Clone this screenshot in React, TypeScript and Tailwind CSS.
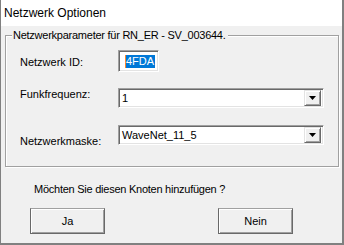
import type { ReactNode } from 'react';

function Sunken({ className, children }: { className: string; children?: ReactNode }) {
  return (
    <div
      className={`flex items-center bg-white border border-t-[#a0a0a0] border-l-[#a0a0a0] border-b-white border-r-white shadow-[inset_1px_1px_0_#696969,inset_-1px_-1px_0_#e3e3e3] ${className}`}
    >
      {children}
    </div>
  );
}

function ComboBox({ value }: { value: string }) {
  return (
    <Sunken className="w-[206px] h-[20px] pl-[3px] pr-[2px]">
      <span className="flex-1 leading-[13px] text-black">{value}</span>
      {/* dropdown arrow button */}
      <div className="w-[17px] h-[16px] flex items-center justify-center bg-[#f0f0f0] border border-t-[#e3e3e3] border-l-[#e3e3e3] border-b-[#696969] border-r-[#696969] shadow-[inset_1px_1px_0_#fff,inset_-1px_-1px_0_#a0a0a0]">
        <svg width="7" height="4" viewBox="0 0 7 4">
          <path d="M0 0h7L3.5 4z" fill="#000" />
        </svg>
      </div>
    </Sunken>
  );
}

function DialogButton({ label }: { label: string }) {
  return (
    <button
      type="button"
      className="w-[75px] h-[26px] bg-[#f0f0f0] border border-t-[#a0a0a0] border-l-[#696969] border-b-[#696969] border-r-[#696969] shadow-[inset_1px_1px_0_#fff,inset_-1px_-1px_0_#a0a0a0] text-[11px] leading-[13px] text-black"
    >
      {label}
    </button>
  );
}

export default function App() {
  return (
    <div className="w-[344px] h-[245px] flex flex-col bg-[#f0f0f0] border-l border-r-2 border-b-2 border-[#808080] font-['Liberation_Sans',Arial,sans-serif] text-[11px] leading-[13px] text-black">
      {/* Title bar */}
      <div className="h-[26px] shrink-0 bg-white pl-[3px] text-[12px] leading-[26px]">
        Netzwerk Optionen
      </div>

      {/* Group box */}
      <div className="relative mt-[9px] ml-[4px] w-[334px] border border-[#a0a0a0] shadow-[inset_1px_1px_0_#fff,1px_1px_0_#fff] pt-[14px] pb-[18px] pl-[14px]">
        <span className="absolute top-[-7px] left-[6px] bg-[#f0f0f0] pl-[1px] pr-[2px] tracking-[-0.25px]">
          Netzwerkparameter für RN_ER - SV_003644.
        </span>

        <div className="flex items-start">
          <span className="w-[98px] mt-[6px]">Netzwerk ID:</span>
          <Sunken className="w-[41px] h-[22px] pl-[6px]">
            <span className="w-px h-[13px] bg-[#ff8728]" />
            <span className="bg-[#0078d7] text-white leading-[13px] pr-px">4FDA</span>
          </Sunken>
        </div>

        <div className="flex items-start mt-[16px]">
          <span className="w-[98px] mt-[0px]">Funkfrequenz:</span>
          <ComboBox value="1" />
        </div>

        <div className="flex items-start mt-[17px]">
          <span className="w-[98px] mt-[10px]">Netzwerkmaske:</span>
          <ComboBox value="WaveNet_11_5" />
        </div>
      </div>

      <p className="mt-[16px] ml-[33px] tracking-[-0.25px]">Möchten Sie diesen Knoten hinzufügen ?</p>

      <div className="flex mt-[12px] ml-[29px] gap-[113px]">
        <DialogButton label="Ja" />
        <DialogButton label="Nein" />
      </div>
    </div>
  );
}
